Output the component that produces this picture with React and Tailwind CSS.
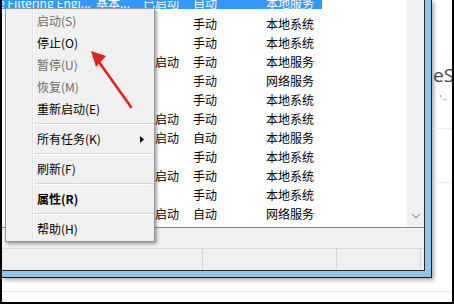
import React from 'react'

const font = { fontFamily: '"Noto Sans CJK SC", "Noto Sans", sans-serif' }

const rows = [
  ['', '手动', '本地系统'],
  ['', '手动', '本地系统'],
  ['已启动', '手动', '本地服务'],
  ['', '手动', '网络服务'],
  ['', '手动', '本地系统'],
  ['已启动', '手动', '本地系统'],
  ['已启动', '自动', '本地服务'],
  ['', '手动', '本地系统'],
  ['已启动', '手动', '本地系统'],
  ['', '手动', '本地系统'],
  ['已启动', '自动', '网络服务'],
]

const menu = [
  { label: '启动(S)', disabled: true },
  { label: '停止(O)' },
  { label: '暂停(U)', disabled: true },
  { label: '恢复(M)', disabled: true },
  { label: '重新启动(E)' },
  { sep: true },
  { label: '所有任务(K)', sub: true },
  { sep: true },
  { label: '刷新(F)' },
  { sep: true },
  { label: '属性(R)', bold: true },
  { sep: true },
  { label: '帮助(H)' },
]

function ListRow({ status, type, logon }) {
  return (
    <div className="flex h-[19px] leading-[19px] text-[12px] text-black whitespace-nowrap">
      <div className="w-[88px]" />
      <div className="w-[50px]" />
      <div className="w-[48px] pl-[3px] overflow-hidden">{status}</div>
      <div className="w-[72px] pl-[5px]">{type}</div>
      <div className="w-[62px] pl-[6px]">{logon}</div>
    </div>
  )
}

function ContextMenu() {
  return (
    <div className="absolute left-[3px] top-[8px] w-[150px] flex border border-[#979797] bg-[#f0f0f0] shadow-[2px_2px_3px_rgba(0,0,0,0.35)]">
      <div className="w-[26px]" />
      <div className="w-px bg-[#e2e3e3]" />
      <div className="w-px bg-white" />
      <div className="flex-1 flex flex-col py-[1px]">
        {menu.map((m, i) =>
          m.sep ? (
            <div key={i} className="h-[8px] flex flex-col justify-center">
              <div className="h-px bg-[#d7d7d7]" />
              <div className="h-px bg-white" />
            </div>
          ) : (
            <div
              key={i}
              className={`h-[22px] flex items-center justify-between pl-[3px] pr-[10px] text-[12px] ${m.disabled ? 'text-[#6d6d6d]' : 'text-black'} ${m.bold ? 'font-bold' : ''}`}
            >
              <span>{m.label}</span>
              {m.sub && (
                <svg width="4" height="7" viewBox="0 0 4 7">
                  <path d="M0 0 L4 3.5 L0 7 Z" fill="#000" />
                </svg>
              )}
            </div>
          )
        )}
      </div>
    </div>
  )
}

export default function App() {
  return (
    <div className="relative w-[454px] h-[304px] bg-black pl-[2px] pr-[2px] pb-[2px]" style={font}>
      <div className="relative h-full bg-white overflow-hidden flex flex-col">
        <div className="flex">
          {/* window */}
          <div className="w-[430px] h-[278px] bg-[#8fc6f1] pr-[6px] pb-[6px] border-r border-b border-[#1b1b1b] shadow-[2px_2px_4px_rgba(0,0,0,0.35)]">
            <div className="h-full flex flex-col border-r border-b border-[#2a2a2a] bg-[#f0f0f0]">
              {/* list */}
              <div className="h-[228px] flex border-b border-[#8a8a8a] bg-white">
                <div className="w-[405px] flex flex-col">
                  <div className="h-[14px]">
                    <div className="h-[9px] w-[320px] bg-[#3399ff] overflow-hidden flex text-[12px] leading-[4px] pt-[1px] text-white whitespace-nowrap">
                      <div className="w-[88px] overflow-hidden indent-[-4px]">e Filtering Engi...</div>
                      <div className="w-[50px] pl-[6px]">基本...</div>
                      <div className="w-[48px] pl-[3px] overflow-hidden">已启动</div>
                      <div className="w-[72px] pl-[5px]">自动</div>
                      <div className="w-[62px] pl-[6px]">本地服务</div>
                    </div>
                  </div>
                  {rows.map((r, i) => (
                    <ListRow key={i} status={r[0]} type={r[1]} logon={r[2]} />
                  ))}
                </div>
                <div className="flex-1 bg-[#f0f0f0] flex flex-col justify-end items-center pb-[8px]">
                  <svg width="8" height="5" viewBox="0 0 8 5">
                    <path d="M0.5 0.5 L4 4 L7.5 0.5" fill="none" stroke="#606060" strokeWidth="1" />
                  </svg>
                </div>
              </div>
              <div className="h-[20px] bg-[#f0f0f0]" />
              {/* status bar */}
              <div className="flex-1 flex border-t border-[#dadada] bg-[#f0f0f0]">
                <div className="w-[201px] border-r border-[#d5d5d5]" />
                <div className="w-[134px] border-r border-[#d5d5d5]" />
                <div className="w-[84px] border-r border-[#d5d5d5]" />
              </div>
            </div>
          </div>
          {/* background app */}
          <div className="flex-1 flex flex-col pt-[64px] pl-[1px] text-[#444] overflow-hidden">
            <div className="text-[19px] leading-[22px] whitespace-nowrap" style={{ fontFamily: '"Open Sans", sans-serif' }}>eS</div>
            <div className="mt-[8px] text-[9px] leading-[10px] pl-[6px] text-[#777] whitespace-nowrap">' -</div>
            <div className="mt-[24px] h-px bg-[#ececec]" />
            <div className="mt-[53px] h-px bg-[#ececec]" />
          </div>
        </div>
        <div className="mt-[13px] h-px bg-[#ececec]" />
        <ContextMenu />
      </div>
      <svg className="absolute left-0 top-0 pointer-events-none" width="454" height="304" viewBox="0 0 454 304">
        <line x1="131" y1="107" x2="99" y2="62" stroke="#e4221d" strokeWidth="2.6" strokeLinecap="round" />
        <polygon points="91,51 106,56 96,67" fill="#e4221d" />
      </svg>
    </div>
  )
}
